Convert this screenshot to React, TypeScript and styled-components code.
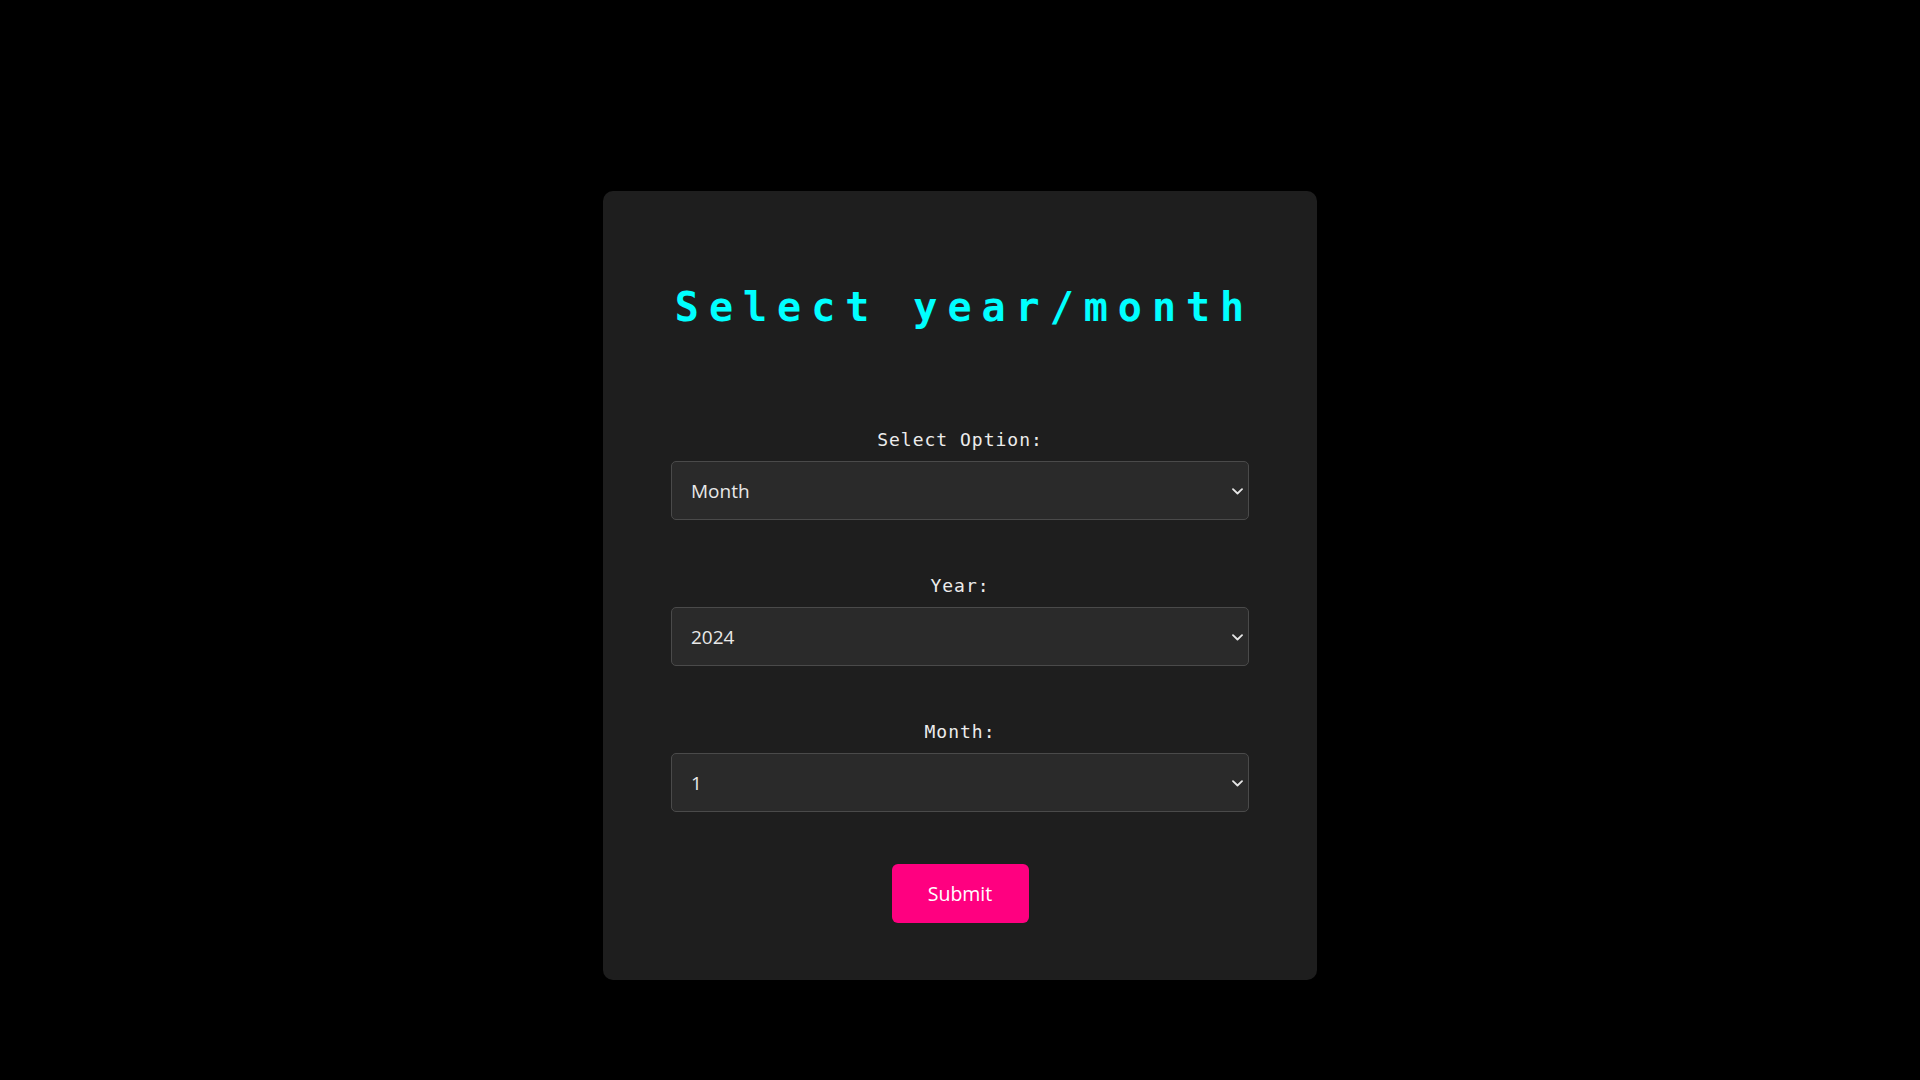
import React, { useState } from "react";
import styled, { createGlobalStyle } from "styled-components";

const GlobalStyle = createGlobalStyle`
  html, body {
    margin: 0;
    padding: 0;
    background: #000000;
    height: 100%;
  }
  body {
    font-family: "Open Sans", "Noto Sans", sans-serif;
    color: #e0e0e0;
  }
  #root {
    min-height: 100%;
  }
`;

const Page = styled.main`
  min-height: 1080px;
  display: flex;
  justify-content: center;
  align-items: flex-start;
  padding-top: 191px;
  box-sizing: border-box;
`;

const Card = styled.form`
  width: 714px;
  height: 789px;
  box-sizing: border-box;
  background: #1e1e1e;
  border-radius: 10px;
  padding: 93px 68px 0;
  display: flex;
  flex-direction: column;
  align-items: stretch;
`;

const Title = styled.h1`
  margin: 0 -30px 99px;
  padding-left: 9px;
  font-family: "DejaVu Sans Mono", monospace;
  font-weight: bold;
  font-size: 40px;
  line-height: normal;
  letter-spacing: 10px;
  white-space: nowrap;
  color: #00ffff;
  text-align: center;
`;

const Field = styled.div`
  display: flex;
  flex-direction: column;
  align-items: stretch;
  margin-bottom: 55px;

  &:last-of-type {
    margin-bottom: 52px;
  }
`;

const Label = styled.label`
  font-family: "DejaVu Sans Mono", monospace;
  font-size: 18px;
  line-height: 21px;
  letter-spacing: 1px;
  color: #ececec;
  text-align: center;
  margin-bottom: 11px;
`;

const SelectWrap = styled.div`
  position: relative;
  display: flex;
`;

const Select = styled.select`
  appearance: none;
  -webkit-appearance: none;
  height: 59px;
  box-sizing: border-box;
  width: 100%;
  padding: 0 30px 0 19px;
  font-family: "Open Sans", "Noto Sans", sans-serif;
  font-size: 19px;
  color: #e8e8e8;
  background-color: #2a2a2a;
  border: 1px solid #4a4a4a;
  border-radius: 5px;
  color-scheme: dark;
  outline: none;
`;

const Chevron = styled.svg`
  position: absolute;
  right: 6px;
  top: 50%;
  width: 11px;
  height: 7px;
  margin-top: -3px;
  pointer-events: none;
`;

const SubmitButton = styled.button`
  align-self: center;
  width: 137px;
  height: 59px;
  border: none;
  border-radius: 6px;
  background: #ff0080;
  color: #ffffff;
  font-family: "Open Sans", "Noto Sans", sans-serif;
  font-size: 19.5px;
  cursor: pointer;
  padding: 0;
`;

const months = Array.from({ length: 12 }, (_, i) => String(i + 1));
const years = ["2022", "2023", "2024", "2025"];

function Dropdown(props: {
  id: string;
  value: string;
  onChange: (v: string) => void;
  options: string[];
}) {
  return (
    <SelectWrap>
      <Select id={props.id} value={props.value} onChange={(e) => props.onChange(e.target.value)}>
        {props.options.map((o) => (
          <option key={o} value={o}>
            {o}
          </option>
        ))}
      </Select>
      <Chevron viewBox="0 0 11 7" aria-hidden="true">
        <path d="M1 1.2 L5.5 5.5 L10 1.2" fill="none" stroke="#e6e6e6" strokeWidth="1.8" strokeLinecap="round" strokeLinejoin="round" />
      </Chevron>
    </SelectWrap>
  );
}

export default function App() {
  const [option, setOption] = useState("Month");
  const [year, setYear] = useState("2024");
  const [month, setMonth] = useState("1");

  return (
    <>
      <GlobalStyle />
      <Page>
        <Card onSubmit={(e) => e.preventDefault()}>
          <Title>Select year/month</Title>
          <Field>
            <Label htmlFor="opt">Select Option:</Label>
            <Dropdown id="opt" value={option} onChange={setOption} options={["Year", "Month"]} />
          </Field>
          <Field>
            <Label htmlFor="year">Year:</Label>
            <Dropdown id="year" value={year} onChange={setYear} options={years} />
          </Field>
          <Field>
            <Label htmlFor="month">Month:</Label>
            <Dropdown id="month" value={month} onChange={setMonth} options={months} />
          </Field>
          <SubmitButton type="submit">Submit</SubmitButton>
        </Card>
      </Page>
    </>
  );
}
